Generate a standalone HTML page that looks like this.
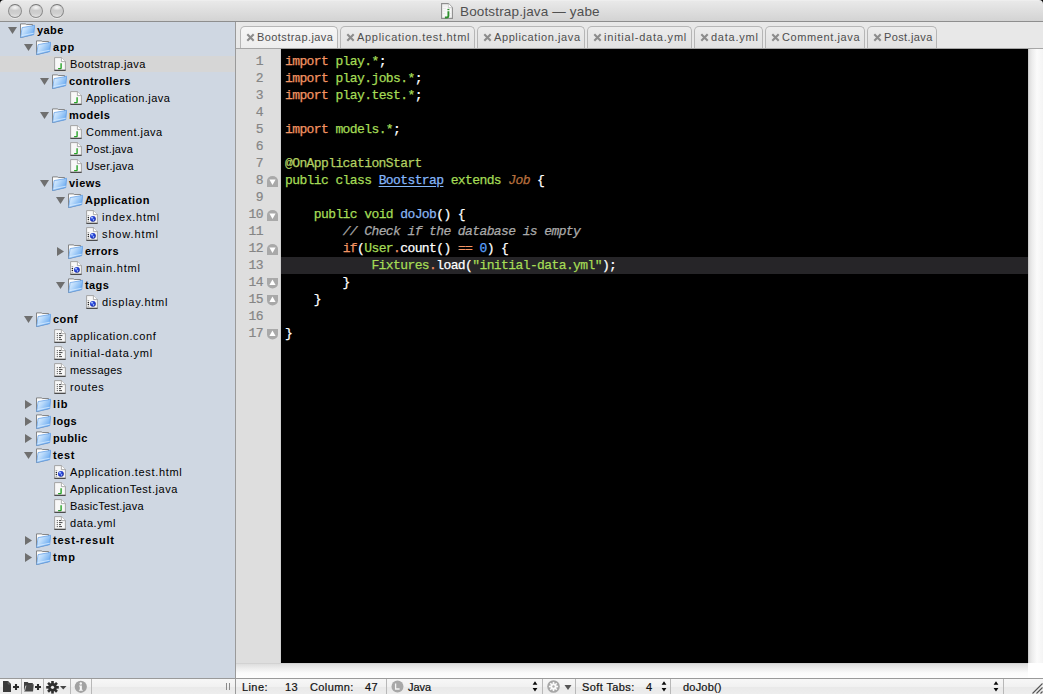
<!DOCTYPE html><html><head><meta charset="utf-8"><title>Bootstrap.java — yabe</title><style>
*{margin:0;padding:0;box-sizing:border-box}
html,body{width:1043px;height:694px;overflow:hidden;background:#cfd7e2;font-family:"Liberation Sans",sans-serif}
.a{position:absolute}
#title{left:0;top:0;width:1043px;height:22px;background:linear-gradient(#f3f3f3 0,#e9e9e9 1px,#d3d3d3 21px);border-bottom:1px solid #8e8e8e;border-radius:4px 4px 0 0}
.btn{top:4px;width:14px;height:14px;border-radius:50%;background:radial-gradient(ellipse 5px 3px at 50% 22%,#f6f6f6 0,rgba(246,246,246,0) 100%),linear-gradient(#d8d8d8 0,#cbcbcb 45%,#cfcfcf 70%,#e2e2e2 100%);border:1px solid #8c8c8c;border-top-color:#777;box-shadow:0 1px 0 rgba(255,255,255,0.5)}
#ttxt{left:460px;top:4px;font-size:13.5px;letter-spacing:0.15px;color:#505050;white-space:nowrap;line-height:16px}
#side{left:0;top:22px;width:235px;height:656px;background:#cfd7e2}
.row{left:0;width:235px;height:16px;font-size:11px;letter-spacing:0.35px;color:#000;line-height:16px;white-space:nowrap}
.row.sel{background:#d6d6d6}
.row b{font-weight:bold}
.row span{position:absolute;top:0}
#vdiv{left:235px;top:22px;width:1px;height:672px;background:#9a9a9a}
#tabbar{left:236px;top:22px;width:807px;height:27px;background:#e8e8e8;border-bottom:1px solid #a6a6a6}
.tab{top:26px;height:22px;border:1px solid #b6b6b6;border-bottom:none;border-radius:5px 5px 0 0;background:linear-gradient(#ececec,#e2e2e2);font-size:11px;letter-spacing:0.4px;color:#4e4e4e;line-height:20px;white-space:nowrap}
.tab.cur{background:linear-gradient(#f6f6f6,#ededed)}
.tab .x{position:absolute;top:0;font-size:11px;color:#8a8a8a;letter-spacing:0}
.tab .t{position:absolute;top:0}
#gutter{left:236px;top:49px;width:45px;height:614px;background:#dedede;border-right:1px solid #d0d0d0}
#code{left:281px;top:49px;width:747px;height:614px;background:#000}
#hl{left:281px;top:257px;width:747px;height:17px;background:#262528}
.ln{left:236px;width:27px;height:17px;text-align:right;-webkit-text-stroke:0.2px #858585;font-family:"Liberation Mono",monospace;font-size:13px;letter-spacing:-0.6px;color:#858585;line-height:17px}
.cl{left:285px;height:17px;font-family:"Liberation Mono",monospace;font-size:13px;letter-spacing:-0.6px;color:#fff;line-height:17px;white-space:pre;-webkit-text-stroke:0.25px currentColor}
.k{color:#f39463}.g{color:#a5dc56}.an{color:#b3d162}.cn{color:#84b6fa;text-decoration:underline;text-underline-offset:2px}
.it{color:#b8703e;font-style:italic}.cm{color:#aaaaaa;font-style:italic}.n{color:#5aa2ff}.fn{color:#8ab7f3}
#vscroll{left:1028px;top:49px;width:15px;height:614px;background:linear-gradient(90deg,#b9b9b9 0,#dcdcdc 1px,#ececec 4px,#fbfbfb 9px,#f4f4f4 15px)}
#hscroll{left:236px;top:663px;width:792px;height:15px;background:linear-gradient(#c6c6c6 0,#dedede 1px,#ececec 5px,#fbfbfb 10px,#fdfdfd 15px)}
#corner{left:1028px;top:663px;width:15px;height:15px;background:#fff}
#status{left:236px;top:678px;width:807px;height:16px;background:linear-gradient(#f7f7f7,#f1f1f1 50%,#e9e9e9 51%,#ededed);border-top:1px solid #9a9a9a;font-size:11px;letter-spacing:0.4px;color:#111;line-height:15px;white-space:nowrap}
#stool{left:0;top:678px;width:235px;height:16px;background:linear-gradient(#f7f7f7,#f1f1f1 50%,#e9e9e9 51%,#ededed);border-top:1px solid #9a9a9a}
.sd{top:0;width:1px;height:15px;background:#b8b8b8}
.st{position:absolute;top:1px;-webkit-text-stroke:0.2px #111}
</style></head><body>
<svg width="0" height="0" style="position:absolute"><defs>
<linearGradient id="fg" x1="0" y1="0" x2="1" y2="0.6"><stop offset="0" stop-color="#eef6ff"/><stop offset="0.45" stop-color="#b9dafb"/><stop offset="1" stop-color="#6aaaf0"/></linearGradient>


<radialGradient id="gl" cx="0.4" cy="0.4" r="0.7"><stop offset="0" stop-color="#4a6cf0"/><stop offset="0.6" stop-color="#1c34c8"/><stop offset="1" stop-color="#0a1470"/></radialGradient>


</defs></svg>
<div class="a" style="left:0;top:0;width:4px;height:4px;background:#000"></div><div class="a" style="left:1039px;top:0;width:4px;height:4px;background:#000"></div><div id="title" class="a"></div>
<div class="a btn" style="left:8px"></div>
<div class="a btn" style="left:29px"></div>
<div class="a btn" style="left:50px"></div>
<svg class="a" style="left:441px;top:3px" width="12" height="16"><path d="M0.6 0.6H7.3L11.4 4.7V15.4H0.6z" fill="#f8f8f8" stroke="#8e8e8e" stroke-width="1.1"/><path d="M7.3 0.6V4.7H11.4" fill="#fff" stroke="#a8a8a8" stroke-width="0.6"/><path d="M1.8 3H6M2 5.5H5M1.8 8H4.5M2 10.5H4M8.5 10.5H10M8.5 13H10" stroke="#e0e0e0" stroke-width="0.6"/><rect x="6.4" y="5.9" width="2" height="1.3" fill="#2e8f2e"/><path d="M7.4 8.3V13.1Q7.4 14.5 6 14.5H3.9" fill="none" stroke="#2e8f2e" stroke-width="1.9"/></svg>
<div id="ttxt" class="a">Bootstrap.java — yabe</div>
<div id="side" class="a"></div>
<div class="a row" style="top:22px">
<svg class="a" style="left:8px;top:5px" width="9" height="7"><path d="M0 0H9L4.5 7z" fill="#6f6f6f"/></svg>
<svg class="a" style="left:20px;top:1px" width="15" height="15"><path d="M0.5 14.6V0.9H5.3L6.3 1.5H12.6V11.5z" fill="#fdfdfd" stroke="#7a7a7a" stroke-width="0.9"/><path d="M2.1 4.6L14.7 2.3L13.7 11.7L0.6 14.6z" fill="url(#fg)" stroke="#5b9be4" stroke-width="0.7"/><path d="M1.6 12.6L13.8 10.2" stroke="#d8ecff" stroke-width="0.8"/></svg>
<span style="left:37px;letter-spacing:0.417px"><b>yabe</b></span>
</div>
<div class="a row" style="top:39px">
<svg class="a" style="left:24px;top:5px" width="9" height="7"><path d="M0 0H9L4.5 7z" fill="#6f6f6f"/></svg>
<svg class="a" style="left:36px;top:1px" width="15" height="15"><path d="M0.5 14.6V0.9H5.3L6.3 1.5H12.6V11.5z" fill="#fdfdfd" stroke="#7a7a7a" stroke-width="0.9"/><path d="M2.1 4.6L14.7 2.3L13.7 11.7L0.6 14.6z" fill="url(#fg)" stroke="#5b9be4" stroke-width="0.7"/><path d="M1.6 12.6L13.8 10.2" stroke="#d8ecff" stroke-width="0.8"/></svg>
<span style="left:53px;letter-spacing:0.800px"><b>app</b></span>
</div>
<div class="a row sel" style="top:56px">
<svg class="a" style="left:54px;top:1px" width="12" height="14"><path d="M0.6 0.6h7l3.8 3.8v9h-10.8z" fill="#f8f8f8" stroke="#9c9c9c" stroke-width="0.9"/><path d="M7.4 0.6v4h4" fill="#fff" stroke="#9a9a9a" stroke-width="0.8"/><path d="M7.1 6.2V10.9Q7.1 11.6 6.4 11.6H4.1" fill="none" stroke="#28a428" stroke-width="1.4"/><path d="M0.4 13.3h11.2" stroke="#3a3a3a" stroke-width="1.1"/></svg>
<span style="left:70px;letter-spacing:0.388px">Bootstrap.java</span>
</div>
<div class="a row" style="top:73px">
<svg class="a" style="left:40px;top:5px" width="9" height="7"><path d="M0 0H9L4.5 7z" fill="#6f6f6f"/></svg>
<svg class="a" style="left:52px;top:1px" width="15" height="15"><path d="M0.5 14.6V0.9H5.3L6.3 1.5H12.6V11.5z" fill="#fdfdfd" stroke="#7a7a7a" stroke-width="0.9"/><path d="M2.1 4.6L14.7 2.3L13.7 11.7L0.6 14.6z" fill="url(#fg)" stroke="#5b9be4" stroke-width="0.7"/><path d="M1.6 12.6L13.8 10.2" stroke="#d8ecff" stroke-width="0.8"/></svg>
<span style="left:69px;letter-spacing:0.440px"><b>controllers</b></span>
</div>
<div class="a row" style="top:90px">
<svg class="a" style="left:70px;top:1px" width="12" height="14"><path d="M0.6 0.6h7l3.8 3.8v9h-10.8z" fill="#f8f8f8" stroke="#9c9c9c" stroke-width="0.9"/><path d="M7.4 0.6v4h4" fill="#fff" stroke="#9a9a9a" stroke-width="0.8"/><path d="M7.1 6.2V10.9Q7.1 11.6 6.4 11.6H4.1" fill="none" stroke="#28a428" stroke-width="1.4"/><path d="M0.4 13.3h11.2" stroke="#3a3a3a" stroke-width="1.1"/></svg>
<span style="left:86px;letter-spacing:0.450px">Application.java</span>
</div>
<div class="a row" style="top:107px">
<svg class="a" style="left:40px;top:5px" width="9" height="7"><path d="M0 0H9L4.5 7z" fill="#6f6f6f"/></svg>
<svg class="a" style="left:52px;top:1px" width="15" height="15"><path d="M0.5 14.6V0.9H5.3L6.3 1.5H12.6V11.5z" fill="#fdfdfd" stroke="#7a7a7a" stroke-width="0.9"/><path d="M2.1 4.6L14.7 2.3L13.7 11.7L0.6 14.6z" fill="url(#fg)" stroke="#5b9be4" stroke-width="0.7"/><path d="M1.6 12.6L13.8 10.2" stroke="#d8ecff" stroke-width="0.8"/></svg>
<span style="left:69px;letter-spacing:0.470px"><b>models</b></span>
</div>
<div class="a row" style="top:124px">
<svg class="a" style="left:70px;top:1px" width="12" height="14"><path d="M0.6 0.6h7l3.8 3.8v9h-10.8z" fill="#f8f8f8" stroke="#9c9c9c" stroke-width="0.9"/><path d="M7.4 0.6v4h4" fill="#fff" stroke="#9a9a9a" stroke-width="0.8"/><path d="M7.1 6.2V10.9Q7.1 11.6 6.4 11.6H4.1" fill="none" stroke="#28a428" stroke-width="1.4"/><path d="M0.4 13.3h11.2" stroke="#3a3a3a" stroke-width="1.1"/></svg>
<span style="left:86px;letter-spacing:0.468px">Comment.java</span>
</div>
<div class="a row" style="top:141px">
<svg class="a" style="left:70px;top:1px" width="12" height="14"><path d="M0.6 0.6h7l3.8 3.8v9h-10.8z" fill="#f8f8f8" stroke="#9c9c9c" stroke-width="0.9"/><path d="M7.4 0.6v4h4" fill="#fff" stroke="#9a9a9a" stroke-width="0.8"/><path d="M7.1 6.2V10.9Q7.1 11.6 6.4 11.6H4.1" fill="none" stroke="#28a428" stroke-width="1.4"/><path d="M0.4 13.3h11.2" stroke="#3a3a3a" stroke-width="1.1"/></svg>
<span style="left:86px;letter-spacing:0.212px">Post.java</span>
</div>
<div class="a row" style="top:158px">
<svg class="a" style="left:70px;top:1px" width="12" height="14"><path d="M0.6 0.6h7l3.8 3.8v9h-10.8z" fill="#f8f8f8" stroke="#9c9c9c" stroke-width="0.9"/><path d="M7.4 0.6v4h4" fill="#fff" stroke="#9a9a9a" stroke-width="0.8"/><path d="M7.1 6.2V10.9Q7.1 11.6 6.4 11.6H4.1" fill="none" stroke="#28a428" stroke-width="1.4"/><path d="M0.4 13.3h11.2" stroke="#3a3a3a" stroke-width="1.1"/></svg>
<span style="left:86px;letter-spacing:0.212px">User.java</span>
</div>
<div class="a row" style="top:175px">
<svg class="a" style="left:40px;top:5px" width="9" height="7"><path d="M0 0H9L4.5 7z" fill="#6f6f6f"/></svg>
<svg class="a" style="left:52px;top:1px" width="15" height="15"><path d="M0.5 14.6V0.9H5.3L6.3 1.5H12.6V11.5z" fill="#fdfdfd" stroke="#7a7a7a" stroke-width="0.9"/><path d="M2.1 4.6L14.7 2.3L13.7 11.7L0.6 14.6z" fill="url(#fg)" stroke="#5b9be4" stroke-width="0.7"/><path d="M1.6 12.6L13.8 10.2" stroke="#d8ecff" stroke-width="0.8"/></svg>
<span style="left:69px;letter-spacing:0.500px"><b>views</b></span>
</div>
<div class="a row" style="top:192px">
<svg class="a" style="left:56px;top:5px" width="9" height="7"><path d="M0 0H9L4.5 7z" fill="#6f6f6f"/></svg>
<svg class="a" style="left:68px;top:1px" width="15" height="15"><path d="M0.5 14.6V0.9H5.3L6.3 1.5H12.6V11.5z" fill="#fdfdfd" stroke="#7a7a7a" stroke-width="0.9"/><path d="M2.1 4.6L14.7 2.3L13.7 11.7L0.6 14.6z" fill="url(#fg)" stroke="#5b9be4" stroke-width="0.7"/><path d="M1.6 12.6L13.8 10.2" stroke="#d8ecff" stroke-width="0.8"/></svg>
<span style="left:85px;letter-spacing:0.460px"><b>Application</b></span>
</div>
<div class="a row" style="top:209px">
<svg class="a" style="left:86px;top:1px" width="12" height="14"><path d="M0.6 0.6h7l3.8 3.8v9h-10.8z" fill="#f8f8f8" stroke="#9c9c9c" stroke-width="0.9"/><path d="M7.4 0.6v4h4" fill="#fff" stroke="#9a9a9a" stroke-width="0.8"/><path d="M1.6 5.5h1.6M1.6 11.4h1.6" stroke="#777" stroke-width="0.6"/><circle cx="2.4" cy="7.5" r="0.75" fill="#222"/><circle cx="2.4" cy="9.4" r="0.75" fill="#222"/><circle cx="6.9" cy="8.8" r="2.9" fill="url(#gl)"/><circle cx="6.0" cy="7.6" r="0.9" fill="#b8d4ff"/><circle cx="7.6" cy="9.9" r="0.8" fill="#9cc0ff"/><path d="M0.4 13.3h11.2" stroke="#3a3a3a" stroke-width="1.1"/></svg>
<span style="left:102px;letter-spacing:0.783px">index.html</span>
</div>
<div class="a row" style="top:226px">
<svg class="a" style="left:86px;top:1px" width="12" height="14"><path d="M0.6 0.6h7l3.8 3.8v9h-10.8z" fill="#f8f8f8" stroke="#9c9c9c" stroke-width="0.9"/><path d="M7.4 0.6v4h4" fill="#fff" stroke="#9a9a9a" stroke-width="0.8"/><path d="M1.6 5.5h1.6M1.6 11.4h1.6" stroke="#777" stroke-width="0.6"/><circle cx="2.4" cy="7.5" r="0.75" fill="#222"/><circle cx="2.4" cy="9.4" r="0.75" fill="#222"/><circle cx="6.9" cy="8.8" r="2.9" fill="url(#gl)"/><circle cx="6.0" cy="7.6" r="0.9" fill="#b8d4ff"/><circle cx="7.6" cy="9.9" r="0.8" fill="#9cc0ff"/><path d="M0.4 13.3h11.2" stroke="#3a3a3a" stroke-width="1.1"/></svg>
<span style="left:102px;letter-spacing:0.875px">show.html</span>
</div>
<div class="a row" style="top:243px">
<svg class="a" style="left:57px;top:4px" width="7" height="9"><path d="M0 0V9L7 4.5z" fill="#6f6f6f"/></svg>
<svg class="a" style="left:68px;top:1px" width="15" height="15"><path d="M0.5 14.6V0.9H5.3L6.3 1.5H12.6V11.5z" fill="#fdfdfd" stroke="#7a7a7a" stroke-width="0.9"/><path d="M2.1 4.6L14.7 2.3L13.7 11.7L0.6 14.6z" fill="url(#fg)" stroke="#5b9be4" stroke-width="0.7"/><path d="M1.6 12.6L13.8 10.2" stroke="#d8ecff" stroke-width="0.8"/></svg>
<span style="left:85px;letter-spacing:0.350px"><b>errors</b></span>
</div>
<div class="a row" style="top:260px">
<svg class="a" style="left:70px;top:1px" width="12" height="14"><path d="M0.6 0.6h7l3.8 3.8v9h-10.8z" fill="#f8f8f8" stroke="#9c9c9c" stroke-width="0.9"/><path d="M7.4 0.6v4h4" fill="#fff" stroke="#9a9a9a" stroke-width="0.8"/><path d="M1.6 5.5h1.6M1.6 11.4h1.6" stroke="#777" stroke-width="0.6"/><circle cx="2.4" cy="7.5" r="0.75" fill="#222"/><circle cx="2.4" cy="9.4" r="0.75" fill="#222"/><circle cx="6.9" cy="8.8" r="2.9" fill="url(#gl)"/><circle cx="6.0" cy="7.6" r="0.9" fill="#b8d4ff"/><circle cx="7.6" cy="9.9" r="0.8" fill="#9cc0ff"/><path d="M0.4 13.3h11.2" stroke="#3a3a3a" stroke-width="1.1"/></svg>
<span style="left:86px;letter-spacing:0.788px">main.html</span>
</div>
<div class="a row" style="top:277px">
<svg class="a" style="left:56px;top:5px" width="9" height="7"><path d="M0 0H9L4.5 7z" fill="#6f6f6f"/></svg>
<svg class="a" style="left:68px;top:1px" width="15" height="15"><path d="M0.5 14.6V0.9H5.3L6.3 1.5H12.6V11.5z" fill="#fdfdfd" stroke="#7a7a7a" stroke-width="0.9"/><path d="M2.1 4.6L14.7 2.3L13.7 11.7L0.6 14.6z" fill="url(#fg)" stroke="#5b9be4" stroke-width="0.7"/><path d="M1.6 12.6L13.8 10.2" stroke="#d8ecff" stroke-width="0.8"/></svg>
<span style="left:85px;letter-spacing:0.420px"><b>tags</b></span>
</div>
<div class="a row" style="top:294px">
<svg class="a" style="left:86px;top:1px" width="12" height="14"><path d="M0.6 0.6h7l3.8 3.8v9h-10.8z" fill="#f8f8f8" stroke="#9c9c9c" stroke-width="0.9"/><path d="M7.4 0.6v4h4" fill="#fff" stroke="#9a9a9a" stroke-width="0.8"/><path d="M1.6 5.5h1.6M1.6 11.4h1.6" stroke="#777" stroke-width="0.6"/><circle cx="2.4" cy="7.5" r="0.75" fill="#222"/><circle cx="2.4" cy="9.4" r="0.75" fill="#222"/><circle cx="6.9" cy="8.8" r="2.9" fill="url(#gl)"/><circle cx="6.0" cy="7.6" r="0.9" fill="#b8d4ff"/><circle cx="7.6" cy="9.9" r="0.8" fill="#9cc0ff"/><path d="M0.4 13.3h11.2" stroke="#3a3a3a" stroke-width="1.1"/></svg>
<span style="left:102px;letter-spacing:0.746px">display.html</span>
</div>
<div class="a row" style="top:311px">
<svg class="a" style="left:24px;top:5px" width="9" height="7"><path d="M0 0H9L4.5 7z" fill="#6f6f6f"/></svg>
<svg class="a" style="left:36px;top:1px" width="15" height="15"><path d="M0.5 14.6V0.9H5.3L6.3 1.5H12.6V11.5z" fill="#fdfdfd" stroke="#7a7a7a" stroke-width="0.9"/><path d="M2.1 4.6L14.7 2.3L13.7 11.7L0.6 14.6z" fill="url(#fg)" stroke="#5b9be4" stroke-width="0.7"/><path d="M1.6 12.6L13.8 10.2" stroke="#d8ecff" stroke-width="0.8"/></svg>
<span style="left:53px;letter-spacing:0.480px"><b>conf</b></span>
</div>
<div class="a row" style="top:328px">
<svg class="a" style="left:54px;top:1px" width="12" height="14"><path d="M0.6 0.6h7l3.8 3.8v9h-10.8z" fill="#f8f8f8" stroke="#9c9c9c" stroke-width="0.9"/><path d="M7.4 0.6v4h4" fill="#fff" stroke="#9a9a9a" stroke-width="0.8"/><path d="M2.8 4.6h1M5 4.6h2M2.8 6.6h1M5 6.6h3.5M2.8 8.6h1M5 8.6h2M2.8 10.6h1M5 10.6h3" stroke="#333" stroke-width="0.9"/><path d="M0.4 13.3h11.2" stroke="#3a3a3a" stroke-width="1.1"/></svg>
<span style="left:70px;letter-spacing:0.617px">application.conf</span>
</div>
<div class="a row" style="top:345px">
<svg class="a" style="left:54px;top:1px" width="12" height="14"><path d="M0.6 0.6h7l3.8 3.8v9h-10.8z" fill="#f8f8f8" stroke="#9c9c9c" stroke-width="0.9"/><path d="M7.4 0.6v4h4" fill="#fff" stroke="#9a9a9a" stroke-width="0.8"/><path d="M2.8 4.6h1M5 4.6h2M2.8 6.6h1M5 6.6h3.5M2.8 8.6h1M5 8.6h2M2.8 10.6h1M5 10.6h3" stroke="#333" stroke-width="0.9"/><path d="M0.4 13.3h11.2" stroke="#3a3a3a" stroke-width="1.1"/></svg>
<span style="left:70px;letter-spacing:0.797px">initial-data.yml</span>
</div>
<div class="a row" style="top:362px">
<svg class="a" style="left:54px;top:1px" width="12" height="14"><path d="M0.6 0.6h7l3.8 3.8v9h-10.8z" fill="#f8f8f8" stroke="#9c9c9c" stroke-width="0.9"/><path d="M7.4 0.6v4h4" fill="#fff" stroke="#9a9a9a" stroke-width="0.8"/><path d="M2.8 4.6h1M5 4.6h2M2.8 6.6h1M5 6.6h3.5M2.8 8.6h1M5 8.6h2M2.8 10.6h1M5 10.6h3" stroke="#333" stroke-width="0.9"/><path d="M0.4 13.3h11.2" stroke="#3a3a3a" stroke-width="1.1"/></svg>
<span style="left:70px;letter-spacing:0.279px">messages</span>
</div>
<div class="a row" style="top:379px">
<svg class="a" style="left:54px;top:1px" width="12" height="14"><path d="M0.6 0.6h7l3.8 3.8v9h-10.8z" fill="#f8f8f8" stroke="#9c9c9c" stroke-width="0.9"/><path d="M7.4 0.6v4h4" fill="#fff" stroke="#9a9a9a" stroke-width="0.8"/><path d="M2.8 4.6h1M5 4.6h2M2.8 6.6h1M5 6.6h3.5M2.8 8.6h1M5 8.6h2M2.8 10.6h1M5 10.6h3" stroke="#333" stroke-width="0.9"/><path d="M0.4 13.3h11.2" stroke="#3a3a3a" stroke-width="1.1"/></svg>
<span style="left:70px;letter-spacing:0.650px">routes</span>
</div>
<div class="a row" style="top:396px">
<svg class="a" style="left:25px;top:4px" width="7" height="9"><path d="M0 0V9L7 4.5z" fill="#6f6f6f"/></svg>
<svg class="a" style="left:36px;top:1px" width="15" height="15"><path d="M0.5 14.6V0.9H5.3L6.3 1.5H12.6V11.5z" fill="#fdfdfd" stroke="#7a7a7a" stroke-width="0.9"/><path d="M2.1 4.6L14.7 2.3L13.7 11.7L0.6 14.6z" fill="url(#fg)" stroke="#5b9be4" stroke-width="0.7"/><path d="M1.6 12.6L13.8 10.2" stroke="#d8ecff" stroke-width="0.8"/></svg>
<span style="left:53px;letter-spacing:0.850px"><b>lib</b></span>
</div>
<div class="a row" style="top:413px">
<svg class="a" style="left:25px;top:4px" width="7" height="9"><path d="M0 0V9L7 4.5z" fill="#6f6f6f"/></svg>
<svg class="a" style="left:36px;top:1px" width="15" height="15"><path d="M0.5 14.6V0.9H5.3L6.3 1.5H12.6V11.5z" fill="#fdfdfd" stroke="#7a7a7a" stroke-width="0.9"/><path d="M2.1 4.6L14.7 2.3L13.7 11.7L0.6 14.6z" fill="url(#fg)" stroke="#5b9be4" stroke-width="0.7"/><path d="M1.6 12.6L13.8 10.2" stroke="#d8ecff" stroke-width="0.8"/></svg>
<span style="left:53px;letter-spacing:0.353px"><b>logs</b></span>
</div>
<div class="a row" style="top:430px">
<svg class="a" style="left:25px;top:4px" width="7" height="9"><path d="M0 0V9L7 4.5z" fill="#6f6f6f"/></svg>
<svg class="a" style="left:36px;top:1px" width="15" height="15"><path d="M0.5 14.6V0.9H5.3L6.3 1.5H12.6V11.5z" fill="#fdfdfd" stroke="#7a7a7a" stroke-width="0.9"/><path d="M2.1 4.6L14.7 2.3L13.7 11.7L0.6 14.6z" fill="url(#fg)" stroke="#5b9be4" stroke-width="0.7"/><path d="M1.6 12.6L13.8 10.2" stroke="#d8ecff" stroke-width="0.8"/></svg>
<span style="left:53px;letter-spacing:0.390px"><b>public</b></span>
</div>
<div class="a row" style="top:447px">
<svg class="a" style="left:24px;top:5px" width="9" height="7"><path d="M0 0H9L4.5 7z" fill="#6f6f6f"/></svg>
<svg class="a" style="left:36px;top:1px" width="15" height="15"><path d="M0.5 14.6V0.9H5.3L6.3 1.5H12.6V11.5z" fill="#fdfdfd" stroke="#7a7a7a" stroke-width="0.9"/><path d="M2.1 4.6L14.7 2.3L13.7 11.7L0.6 14.6z" fill="url(#fg)" stroke="#5b9be4" stroke-width="0.7"/><path d="M1.6 12.6L13.8 10.2" stroke="#d8ecff" stroke-width="0.8"/></svg>
<span style="left:53px;letter-spacing:0.613px"><b>test</b></span>
</div>
<div class="a row" style="top:464px">
<svg class="a" style="left:54px;top:1px" width="12" height="14"><path d="M0.6 0.6h7l3.8 3.8v9h-10.8z" fill="#f8f8f8" stroke="#9c9c9c" stroke-width="0.9"/><path d="M7.4 0.6v4h4" fill="#fff" stroke="#9a9a9a" stroke-width="0.8"/><path d="M1.6 5.5h1.6M1.6 11.4h1.6" stroke="#777" stroke-width="0.6"/><circle cx="2.4" cy="7.5" r="0.75" fill="#222"/><circle cx="2.4" cy="9.4" r="0.75" fill="#222"/><circle cx="6.9" cy="8.8" r="2.9" fill="url(#gl)"/><circle cx="6.0" cy="7.6" r="0.9" fill="#b8d4ff"/><circle cx="7.6" cy="9.9" r="0.8" fill="#9cc0ff"/><path d="M0.4 13.3h11.2" stroke="#3a3a3a" stroke-width="1.1"/></svg>
<span style="left:70px;letter-spacing:0.665px">Application.test.html</span>
</div>
<div class="a row" style="top:481px">
<svg class="a" style="left:54px;top:1px" width="12" height="14"><path d="M0.6 0.6h7l3.8 3.8v9h-10.8z" fill="#f8f8f8" stroke="#9c9c9c" stroke-width="0.9"/><path d="M7.4 0.6v4h4" fill="#fff" stroke="#9a9a9a" stroke-width="0.8"/><path d="M7.1 6.2V10.9Q7.1 11.6 6.4 11.6H4.1" fill="none" stroke="#28a428" stroke-width="1.4"/><path d="M0.4 13.3h11.2" stroke="#3a3a3a" stroke-width="1.1"/></svg>
<span style="left:70px;letter-spacing:0.529px">ApplicationTest.java</span>
</div>
<div class="a row" style="top:498px">
<svg class="a" style="left:54px;top:1px" width="12" height="14"><path d="M0.6 0.6h7l3.8 3.8v9h-10.8z" fill="#f8f8f8" stroke="#9c9c9c" stroke-width="0.9"/><path d="M7.4 0.6v4h4" fill="#fff" stroke="#9a9a9a" stroke-width="0.8"/><path d="M7.1 6.2V10.9Q7.1 11.6 6.4 11.6H4.1" fill="none" stroke="#28a428" stroke-width="1.4"/><path d="M0.4 13.3h11.2" stroke="#3a3a3a" stroke-width="1.1"/></svg>
<span style="left:70px;letter-spacing:0.250px">BasicTest.java</span>
</div>
<div class="a row" style="top:515px">
<svg class="a" style="left:54px;top:1px" width="12" height="14"><path d="M0.6 0.6h7l3.8 3.8v9h-10.8z" fill="#f8f8f8" stroke="#9c9c9c" stroke-width="0.9"/><path d="M7.4 0.6v4h4" fill="#fff" stroke="#9a9a9a" stroke-width="0.8"/><path d="M2.8 4.6h1M5 4.6h2M2.8 6.6h1M5 6.6h3.5M2.8 8.6h1M5 8.6h2M2.8 10.6h1M5 10.6h3" stroke="#333" stroke-width="0.9"/><path d="M0.4 13.3h11.2" stroke="#3a3a3a" stroke-width="1.1"/></svg>
<span style="left:70px;letter-spacing:0.536px">data.yml</span>
</div>
<div class="a row" style="top:532px">
<svg class="a" style="left:25px;top:4px" width="7" height="9"><path d="M0 0V9L7 4.5z" fill="#6f6f6f"/></svg>
<svg class="a" style="left:36px;top:1px" width="15" height="15"><path d="M0.5 14.6V0.9H5.3L6.3 1.5H12.6V11.5z" fill="#fdfdfd" stroke="#7a7a7a" stroke-width="0.9"/><path d="M2.1 4.6L14.7 2.3L13.7 11.7L0.6 14.6z" fill="url(#fg)" stroke="#5b9be4" stroke-width="0.7"/><path d="M1.6 12.6L13.8 10.2" stroke="#d8ecff" stroke-width="0.8"/></svg>
<span style="left:53px;letter-spacing:0.770px"><b>test-result</b></span>
</div>
<div class="a row" style="top:549px">
<svg class="a" style="left:25px;top:4px" width="7" height="9"><path d="M0 0V9L7 4.5z" fill="#6f6f6f"/></svg>
<svg class="a" style="left:36px;top:1px" width="15" height="15"><path d="M0.5 14.6V0.9H5.3L6.3 1.5H12.6V11.5z" fill="#fdfdfd" stroke="#7a7a7a" stroke-width="0.9"/><path d="M2.1 4.6L14.7 2.3L13.7 11.7L0.6 14.6z" fill="url(#fg)" stroke="#5b9be4" stroke-width="0.7"/><path d="M1.6 12.6L13.8 10.2" stroke="#d8ecff" stroke-width="0.8"/></svg>
<span style="left:53px;letter-spacing:0.850px"><b>tmp</b></span>
</div>
<div id="vdiv" class="a"></div>
<div id="tabbar" class="a"></div>
<div class="a tab cur" style="left:240px;width:98px">
<svg class="a" style="left:5px;top:6px" width="9" height="9"><path d="M1.3 1.3L7.7 7.7M7.7 1.3L1.3 7.7" stroke="#8c8c8c" stroke-width="2.1"/></svg>
<span class="t" style="left:16px;letter-spacing:0.43px">Bootstrap.java</span></div>
<div class="a tab" style="left:340px;width:135px">
<svg class="a" style="left:5px;top:6px" width="9" height="9"><path d="M1.3 1.3L7.7 7.7M7.7 1.3L1.3 7.7" stroke="#8c8c8c" stroke-width="2.1"/></svg>
<span class="t" style="left:16px;letter-spacing:0.7px">Application.test.html</span></div>
<div class="a tab" style="left:477px;width:108px">
<svg class="a" style="left:5px;top:6px" width="9" height="9"><path d="M1.3 1.3L7.7 7.7M7.7 1.3L1.3 7.7" stroke="#8c8c8c" stroke-width="2.1"/></svg>
<span class="t" style="left:16px;letter-spacing:0.6px">Application.java</span></div>
<div class="a tab" style="left:587px;width:105px">
<svg class="a" style="left:5px;top:6px" width="9" height="9"><path d="M1.3 1.3L7.7 7.7M7.7 1.3L1.3 7.7" stroke="#8c8c8c" stroke-width="2.1"/></svg>
<span class="t" style="left:16px;letter-spacing:0.8px">initial-data.yml</span></div>
<div class="a tab" style="left:694px;width:69px">
<svg class="a" style="left:5px;top:6px" width="9" height="9"><path d="M1.3 1.3L7.7 7.7M7.7 1.3L1.3 7.7" stroke="#8c8c8c" stroke-width="2.1"/></svg>
<span class="t" style="left:16px;letter-spacing:0.75px">data.yml</span></div>
<div class="a tab" style="left:765px;width:100px">
<svg class="a" style="left:5px;top:6px" width="9" height="9"><path d="M1.3 1.3L7.7 7.7M7.7 1.3L1.3 7.7" stroke="#8c8c8c" stroke-width="2.1"/></svg>
<span class="t" style="left:16px;letter-spacing:0.6px">Comment.java</span></div>
<div class="a tab" style="left:867px;width:70px">
<svg class="a" style="left:5px;top:6px" width="9" height="9"><path d="M1.3 1.3L7.7 7.7M7.7 1.3L1.3 7.7" stroke="#8c8c8c" stroke-width="2.1"/></svg>
<span class="t" style="left:16px;letter-spacing:0.38px">Post.java</span></div>
<div id="gutter" class="a"></div><div id="code" class="a"></div><div id="hl" class="a"></div>
<div class="a ln" style="top:53px">1</div>
<div class="a cl" style="top:53px"><span class="k">import</span> <span class="g">play.*</span>;</div>
<div class="a ln" style="top:70px">2</div>
<div class="a cl" style="top:70px"><span class="k">import</span> <span class="g">play.jobs.*</span>;</div>
<div class="a ln" style="top:87px">3</div>
<div class="a cl" style="top:87px"><span class="k">import</span> <span class="g">play.test.*</span>;</div>
<div class="a ln" style="top:104px">4</div>
<div class="a ln" style="top:121px">5</div>
<div class="a cl" style="top:121px"><span class="k">import</span> <span class="g">models.*</span>;</div>
<div class="a ln" style="top:138px">6</div>
<div class="a ln" style="top:155px">7</div>
<div class="a cl" style="top:155px"><span class="an">@OnApplicationStart</span></div>
<div class="a ln" style="top:172px">8</div>
<div class="a cl" style="top:172px"><span class="g">public</span> <span class="g">class</span> <span class="cn">Bootstrap</span> <span class="g">extends</span> <span class="it">Job</span> {</div>
<div class="a ln" style="top:189px">9</div>
<div class="a ln" style="top:206px">10</div>
<div class="a cl" style="top:206px">    <span class="g">public</span> <span class="g">void</span> <span class="fn">doJob</span>() {</div>
<div class="a ln" style="top:223px">11</div>
<div class="a cl" style="top:223px">        <span class="cm">// Check if the database is empty</span></div>
<div class="a ln" style="top:240px">12</div>
<div class="a cl" style="top:240px">        <span class="k">if</span>(<span class="g">User</span><span class="k">.</span>count() <span class="k">==</span> <span class="n">0</span>) {</div>
<div class="a ln" style="top:257px">13</div>
<div class="a cl" style="top:257px">            <span class="g">Fixtures</span><span class="k">.</span>load(<span class="g">"initial-data.yml"</span>);</div>
<div class="a ln" style="top:274px">14</div>
<div class="a cl" style="top:274px">        }</div>
<div class="a ln" style="top:291px">15</div>
<div class="a cl" style="top:291px">    }</div>
<div class="a ln" style="top:308px">16</div>
<div class="a ln" style="top:325px">17</div>
<div class="a cl" style="top:325px">}</div>
<svg class="a" style="left:267px;top:175.5px" width="11" height="11"><path d="M0 11V5A5.5 5 0 0 1 11 5V11z" fill="#a9a9a9"/><path d="M2.4 3.6H8.6L5.5 8.9z" fill="#fff"/></svg>
<svg class="a" style="left:267px;top:209.5px" width="11" height="11"><path d="M0 11V5A5.5 5 0 0 1 11 5V11z" fill="#a9a9a9"/><path d="M2.4 3.6H8.6L5.5 8.9z" fill="#fff"/></svg>
<svg class="a" style="left:267px;top:243.5px" width="11" height="11"><path d="M0 11V5A5.5 5 0 0 1 11 5V11z" fill="#a9a9a9"/><path d="M2.4 3.6H8.6L5.5 8.9z" fill="#fff"/></svg>
<svg class="a" style="left:267px;top:277.5px" width="11" height="11"><path d="M0 0V5.5A5.5 5 0 0 0 11 5.5V0z" fill="#a9a9a9"/><path d="M2.4 7H8.6L5.5 1.5z" fill="#fff"/></svg>
<svg class="a" style="left:267px;top:294.5px" width="11" height="11"><path d="M0 0V5.5A5.5 5 0 0 0 11 5.5V0z" fill="#a9a9a9"/><path d="M2.4 7H8.6L5.5 1.5z" fill="#fff"/></svg>
<svg class="a" style="left:267px;top:328.5px" width="11" height="11"><path d="M0 0V5.5A5.5 5 0 0 0 11 5.5V0z" fill="#a9a9a9"/><path d="M2.4 7H8.6L5.5 1.5z" fill="#fff"/></svg>
<div id="vscroll" class="a"></div><div id="hscroll" class="a"></div><div id="corner" class="a"></div>
<div id="stool" class="a">
<div class="a sd" style="left:21px"></div>
<div class="a sd" style="left:43px"></div>
<div class="a sd" style="left:70px"></div>
<div class="a sd" style="left:91px"></div>
<svg class="a" style="left:3px;top:2px" width="17" height="12"><path d="M0 0H5L8 3V11H0z" fill="#3a3a3a"/><path d="M5.2 0.2V3H8" fill="none" stroke="#777" stroke-width="0.6"/><path d="M10 6H16M13 3V9" stroke="#2a2a2a" stroke-width="2.1"/></svg>
<svg class="a" style="left:23px;top:2px" width="19" height="12"><path d="M1 10.6V1.1H4.6L5.6 2H9.8V4.5z" fill="#404040"/><path d="M3 4.3L10.8 3.2L10 10.6H1z" fill="#474747"/><path d="M2.9 4.6L1.4 10.4" stroke="#f4f4f4" stroke-width="0.8"/><path d="M12 6H18M15 3V9" stroke="#2a2a2a" stroke-width="2.1"/></svg>
<svg class="a" style="left:46px;top:2px" width="21" height="13"><g transform="translate(6.5,6.3)"><g fill="#2e2e2e"><rect x="-1.3" y="-6.3" width="2.6" height="12.6"/><rect x="-1.3" y="-6.3" width="2.6" height="12.6" transform="rotate(45)"/><rect x="-1.3" y="-6.3" width="2.6" height="12.6" transform="rotate(90)"/><rect x="-1.3" y="-6.3" width="2.6" height="12.6" transform="rotate(135)"/></g><circle r="4.3" fill="#2e2e2e"/><circle r="1.6" fill="#e8e8e8"/></g><path d="M14 5H20.5L17.25 8.6z" fill="#444"/></svg>
<svg class="a" style="left:74px;top:1px" width="14" height="14"><circle cx="6.8" cy="6.8" r="6.1" fill="#a2a2a2"/><circle cx="6.8" cy="3.5" r="1.2" fill="#f6f6f6"/><path d="M5.1 5.5H7.9V9.8H8.8V10.8H4.9V9.8H5.8V6.5H5.1z" fill="#f6f6f6"/></svg>
<div class="a" style="left:226px;top:4px;width:1px;height:7px;background:#8a8a8a"></div><div class="a" style="left:229px;top:4px;width:1px;height:7px;background:#8a8a8a"></div>
</div>
<div id="status" class="a">
<span class="st" style="left:6px">Line:</span><span class="st" style="left:49px">13</span>
<span class="st" style="left:74px">Column:</span><span class="st" style="left:129px">47</span>
<div class="a sd" style="left:150px"></div>
<div class="a sd" style="left:306px"></div>
<div class="a sd" style="left:339px"></div>
<div class="a sd" style="left:434px"></div>
<div class="a sd" style="left:767px"></div>
<svg class="a" style="left:155px;top:1px" width="13" height="13"><circle cx="6.5" cy="6.5" r="6" fill="#a8a8a8"/><path d="M4.6 3.5V9H8.6" fill="none" stroke="#f4f4f4" stroke-width="1.3"/></svg>
<span class="st" style="left:172px;letter-spacing:0">Java</span>
<svg class="a" style="left:296px;top:0px" width="6" height="13"><path d="M0.6 5.8H5.4L3 2.2zM0.6 9H5.4L3 12.6z" fill="#0a0a0a"/></svg>
<svg class="a" style="left:311px;top:1px" width="26" height="14"><g transform="translate(6.5,6.5)"><circle r="6.3" fill="#a6a6a6"/><g fill="#fbfbfb"><rect x="-0.8" y="-4.6" width="1.6" height="9.2"/><rect x="-0.8" y="-4.6" width="1.6" height="9.2" transform="rotate(45)"/><rect x="-0.8" y="-4.6" width="1.6" height="9.2" transform="rotate(90)"/><rect x="-0.8" y="-4.6" width="1.6" height="9.2" transform="rotate(135)"/></g><circle r="3.1" fill="#fbfbfb"/><circle r="1.2" fill="#b0b0b0"/></g><path d="M17.5 5H24.5L21 10z" fill="#555"/></svg>
<span class="st" style="left:346px">Soft Tabs:</span><span class="st" style="left:410px">4</span>
<svg class="a" style="left:425px;top:0px" width="6" height="13"><path d="M0.6 5.8H5.4L3 2.2zM0.6 9H5.4L3 12.6z" fill="#0a0a0a"/></svg>
<span class="st" style="left:447px;letter-spacing:0.2px">doJob()</span>
<svg class="a" style="left:757px;top:0px" width="6" height="13"><path d="M0.6 5.8H5.4L3 2.2zM0.6 9H5.4L3 12.6z" fill="#0a0a0a"/></svg>
<svg class="a" style="left:793px;top:1px" width="14" height="14"><path d="M3.5 13.5L13.5 3.5M7.5 13.5L13.5 7.5M11.5 13.5L13.5 11.5" stroke="#555" stroke-width="1.1"/></svg>
</div>
</body></html>
